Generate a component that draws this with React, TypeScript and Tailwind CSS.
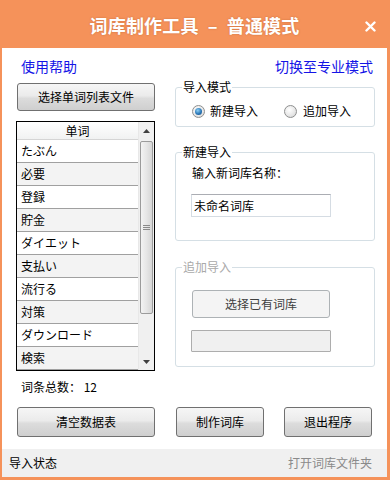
import React from "react";

const words = ["たぶん", "必要", "登録", "貯金", "ダイエット", "支払い", "流行る", "対策", "ダウンロード", "検索"];

const btn =
  "flex items-center justify-center rounded-[3px] border border-[#707070] bg-[linear-gradient(to_bottom,#f6f6f6_0%,#ebebeb_45%,#dcdcdc_55%,#cfcfcf_100%)] text-[12px] leading-[14px] text-black";

function Radio({ checked }: { checked: boolean }) {
  return (
    <span className="w-[13px] h-[13px] rounded-full border border-[#8e8f8f] bg-[radial-gradient(circle_at_40%_35%,#ffffff_0%,#e6e6e6_60%,#cfcfcf_100%)] flex items-center justify-center">
      {checked && (
        <span className="w-[7px] h-[7px] rounded-full bg-[radial-gradient(circle_at_40%_35%,#8fd0f5_0%,#2a78b8_55%,#15467a_100%)]" />
      )}
    </span>
  );
}

export default function App() {
  return (
    <div className="w-[390px] h-[480px] bg-[#f5925a] flex flex-col pl-[2px] pr-[3px] pb-[3px] font-['Noto_Sans_CJK_SC',sans-serif] text-black">
      {/* Title bar */}
      <div className="h-[48px] grid grid-cols-[1fr_auto_1fr] items-center pt-[2px]">
        <div />
        <div className="flex items-center text-white text-[18px] leading-[20px] font-bold tracking-[0.2px] [text-shadow:0_0_2px_rgba(120,50,10,0.35)]">
          <span>词库制作工具</span>
          <span className="mx-[9px]">–</span>
          <span>普通模式</span>
        </div>
        <div className="flex justify-end pr-[11px] pt-[3px]">
          <svg width="11" height="11" viewBox="0 0 11 11">
            <path d="M1.5 1.5 L9.5 9.5 M9.5 1.5 L1.5 9.5" stroke="white" strokeWidth="2.4" strokeLinecap="round" />
          </svg>
        </div>
      </div>

      {/* Content */}
      <div className="h-[401px] bg-white flex flex-col">
        <div className="pt-[11px] pl-[19px] pr-[14px] flex justify-between text-[14px] leading-[14px] text-[#1414e6]">
          <span>使用帮助</span>
          <span>切换至专业模式</span>
        </div>

        <div className="flex items-start">
          {/* Left column */}
          <div className="pl-[14px] pt-[10px] flex flex-col w-[153px]">
            <div className={`${btn} ml-[1px] w-[138px] h-[28px]`}>选择单词列表文件</div>
            <div className="mt-[10px] w-[139px] h-[250px] border border-black flex">
              <div className="w-[121px] flex flex-col">
                <div className="h-[18px] border-b border-[#d5d5d5] bg-[linear-gradient(to_bottom,#ffffff,#f1f2f2)] flex items-center justify-center text-[12px] leading-[14px]">
                  单词
                </div>
                {words.map((w, i) => (
                  <div
                    key={w}
                    className={`h-[23px] border-b border-[#a0a0a0] flex items-center pl-[4px] text-[12px] leading-[14px] font-['Noto_Sans_CJK_JP',sans-serif] ${
                      i % 2 === 0 ? "bg-white" : "bg-[#f3f3f3]"
                    }`}
                  >
                    {w}
                  </div>
                ))}
              </div>
              <div className="w-[16px] bg-[#f0f0f0] flex flex-col border-l border-[#e8e8e8]">
                <div className="h-[17px] flex items-center justify-center">
                  <svg width="7" height="4" viewBox="0 0 7 4">
                    <path d="M0 4 L3.5 0 L7 4 Z" fill="#404040" />
                  </svg>
                </div>
                <div className="flex-1 flex flex-col">
                  <div className="mt-[2px] mx-[1px] h-[173px] rounded-[2px] border border-[#9b9b9b] bg-[linear-gradient(to_right,#f3f3f3,#e6e6e6_50%,#d6d6d6)] flex items-center justify-center">
                    <svg width="7" height="6" viewBox="0 0 7 6">
                      <path d="M0 0.5 H7 M0 2.5 H7 M0 4.5 H7" stroke="#8a8a8a" strokeWidth="1" />
                    </svg>
                  </div>
                </div>
                <div className="h-[17px] flex items-center justify-center">
                  <svg width="7" height="4" viewBox="0 0 7 4">
                    <path d="M0 0 L7 0 L3.5 4 Z" fill="#404040" />
                  </svg>
                </div>
              </div>
            </div>
            <div className="mt-[9px] pl-[5px] text-[12px] leading-[14px]">词条总数：&nbsp;12</div>
          </div>

          {/* Right column */}
          <div className="ml-[20px] pt-[7px] w-[200px] flex flex-col text-[12px]">
            <fieldset className="border border-[#d5dfe5] rounded-[3px] px-[6px]">
              <legend className="px-[1px] leading-[14px]">导入模式</legend>
              <div className="pl-[10px] pt-[10px] pb-[8px] h-[32px] flex items-center leading-[14px]">
                <Radio checked />
                <span className="ml-[5px]">新建导入</span>
                <span className="ml-[26px]">
                  <Radio checked={false} />
                </span>
                <span className="ml-[6px]">追加导入</span>
              </div>
            </fieldset>

            <fieldset className="mt-[18px] border border-[#d5dfe5] rounded-[3px] px-[6px]">
              <legend className="px-[1px] leading-[14px]">新建导入</legend>
              <div className="pl-[9px] pt-[7px] pb-[23px] flex flex-col">
                <div className="pl-[1px] leading-[14px]">输入新词库名称：</div>
                <div className="mt-[14px] w-[140px] h-[23px] border border-[#d5dce3] border-t-[#abadb3] flex items-center pl-[2px] leading-[14px]">
                  未命名词库
                </div>
              </div>
            </fieldset>

            <fieldset className="mt-[19px] border border-[#d5dfe5] rounded-[3px] px-[6px]">
              <legend className="px-[1px] leading-[14px] text-[#a9a9a9]">追加导入</legend>
              <div className="pl-[9px] pt-[16px] pb-[14px] flex flex-col">
                <div className="ml-[1px] w-[138px] h-[28px] rounded-[3px] border border-[#adb2b5] bg-[#f4f4f4] flex items-center justify-center text-[#404040] leading-[14px]">
                  选择已有词库
                </div>
                <div className="mt-[12px] w-[140px] h-[22px] border border-[#adadad] bg-[#f0f0f0] rounded-[1px]" />
              </div>
            </fieldset>
          </div>
        </div>

        {/* Bottom buttons */}
        <div className="mt-[13px] pl-[15px] flex">
          <div className={`${btn} w-[138px] h-[30px]`}>清空数据表</div>
          <div className={`${btn} ml-[21px] w-[88px] h-[30px]`}>制作词库</div>
          <div className={`${btn} ml-[20px] w-[88px] h-[30px]`}>退出程序</div>
        </div>
      </div>

      {/* Status bar */}
      <div className="h-[28px] bg-[#f0f0f0] flex items-center justify-between pl-[7px] pr-[15px] text-[12px] leading-[14px]">
        <span>导入状态</span>
        <span className="text-[#8a8a8a]">打开词库文件夹</span>
      </div>
    </div>
  );
}
